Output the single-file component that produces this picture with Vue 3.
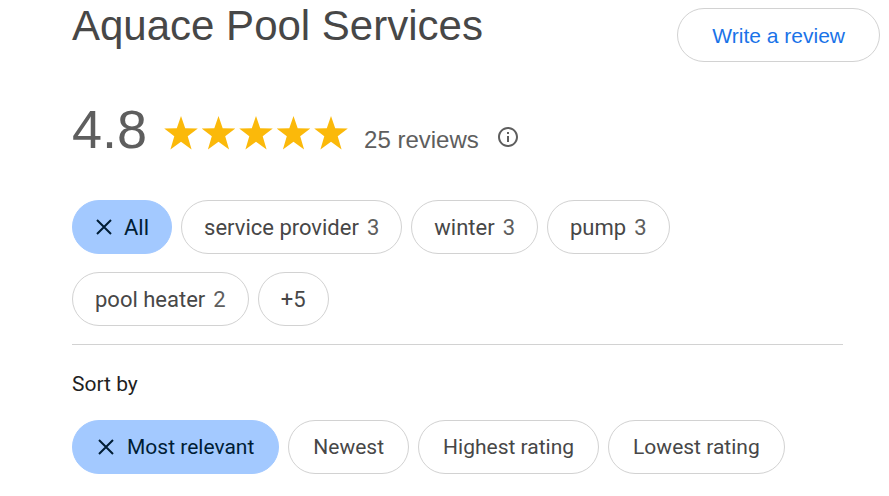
<script setup>
import { ref } from 'vue'

const stars = [0, 1, 2, 3, 4]

const topics = [
  { label: 'All' },
  { label: 'service provider', count: 3 },
  { label: 'winter', count: 3 },
  { label: 'pump', count: 3 },
  { label: 'pool heater', count: 2 },
  { label: '+5' }
]

const sortOptions = ['Most relevant', 'Newest', 'Highest rating', 'Lowest rating']

const activeTopic = ref('All')
const activeSort = ref('Most relevant')
</script>

<template>
  <main class="reviews">
    <header class="header">
      <h1 class="title">Aquace Pool Services</h1>
      <button type="button" class="write-btn">Write a review</button>
    </header>

    <section class="summary">
      <span class="score">4.8</span>
      <svg class="stars" viewBox="0 0 185 36" role="img" aria-label="Rated 4.8 out of 5">
        <path
          v-for="n in stars"
          :key="n"
          :transform="`translate(${n * 37.5} 0)`"
          d="M17 1L21.2 13.2L33.8 13.4L23.7 21.2L27.6 34.4L17 26.8L6.4 34.4L10.3 21.2L0.2 13.4L12.8 13.2Z"
        />
      </svg>
      <span class="count">25 reviews</span>
      <button type="button" class="info-btn" aria-label="About these reviews">
        <svg viewBox="0 0 24 24">
          <path d="M11 7h2v2h-2zm0 4h2v6h-2zm1-9C6.48 2 2 6.48 2 12s4.48 10 10 10 10-4.48 10-10S17.52 2 12 2zm0 18c-4.41 0-8-3.59-8-8s3.59-8 8-8 8 3.59 8 8-3.59 8-8 8z" />
        </svg>
      </button>
    </section>

    <div class="chips topics">
      <button
        v-for="topic in topics"
        :key="topic.label"
        type="button"
        class="chip"
        :class="{ active: topic.label === activeTopic }"
        @click="activeTopic = topic.label"
      >
        <svg v-if="topic.label === activeTopic" class="close" viewBox="0 0 18 18">
          <path d="M2 2L16 16M16 2L2 16" />
        </svg>
        <span>{{ topic.label }}</span>
        <span v-if="topic.count" class="chip-count">{{ topic.count }}</span>
      </button>
    </div>

    <section class="sort">
      <h2 class="sort-title">Sort by</h2>
      <div class="chips">
        <button
          v-for="option in sortOptions"
          :key="option"
          type="button"
          class="chip"
          :class="{ active: option === activeSort }"
          @click="activeSort = option"
        >
          <svg v-if="option === activeSort" class="close" viewBox="0 0 18 18">
            <path d="M2 2L16 16M16 2L2 16" />
          </svg>
          <span>{{ option }}</span>
        </button>
      </div>
    </section>
  </main>
</template>

<style>
body {
  margin: 0;
  background: #fff;
}
</style>

<style scoped>
.reviews {
  padding: 0 46px 22px 72px;
  font-family: Roboto, "Liberation Sans", sans-serif;
  color: #474747;
}

.header {
  display: flex;
  justify-content: space-between;
  align-items: flex-start;
  padding-top: 8px;
  margin-right: -37px;
}

.title {
  margin: -6px 0 0;
  font-family: "Liberation Sans", Arial, sans-serif;
  font-size: 42px;
  font-weight: 400;
  line-height: 48px;
}

.write-btn {
  height: 54px;
  padding: 2px 34px 0;
  border: 1px solid #d2d2d2;
  border-radius: 27px;
  background: #fff;
  color: #1a73e8;
  font-family: "Liberation Sans", Arial, sans-serif;
  font-size: 21px;
  cursor: pointer;
}

.summary {
  display: flex;
  align-items: baseline;
  margin-top: 36px;
  font-family: "Liberation Sans", Arial, sans-serif;
  color: #5e5e5e;
}

.score {
  font-size: 54px;
  line-height: 62px;
}

.stars {
  align-self: center;
  width: 185px;
  height: 36px;
  margin: 8px 16px 0 17px;
  fill: #fbb90a;
}

.count {
  margin-left: -1px;
  font-size: 24px;
}

.info-btn {
  align-self: center;
  display: flex;
  margin: 16px 0 0 17px;
  padding: 0;
  border: 0;
  background: none;
  cursor: pointer;
}

.info-btn svg {
  width: 24px;
  height: 24px;
  fill: #5e5e5e;
}

.chips {
  display: flex;
  flex-wrap: wrap;
  gap: 18px 9px;
}

.topics {
  margin-top: 40px;
  padding-bottom: 18px;
  border-bottom: 1px solid #d2d2d2;
}

.chip {
  display: flex;
  align-items: center;
  gap: 9px;
  height: 54px;
  padding: 0 24px;
  border: 1px solid #d2d2d2;
  border-radius: 27px;
  background: #fff;
  color: #474747;
  font-family: inherit;
  font-size: 21px;
  cursor: pointer;
}

.topics .chip {
  gap: 8px;
  padding: 0 22px;
  font-size: 22px;
}

.chip-count {
  color: #5e5e5e;
}

.chip.active {
  border-color: #a3c9ff;
  background: #a3c9ff;
  color: #001d35;
}

.close {
  width: 18px;
  height: 18px;
  margin-right: 3px;
  fill: none;
  stroke: #001d35;
  stroke-width: 2;
}

.sort-title {
  margin: 27px 0 24px;
  color: #1f1f1f;
  font-size: 21px;
  font-weight: 400;
  line-height: 24px;
}
</style>
